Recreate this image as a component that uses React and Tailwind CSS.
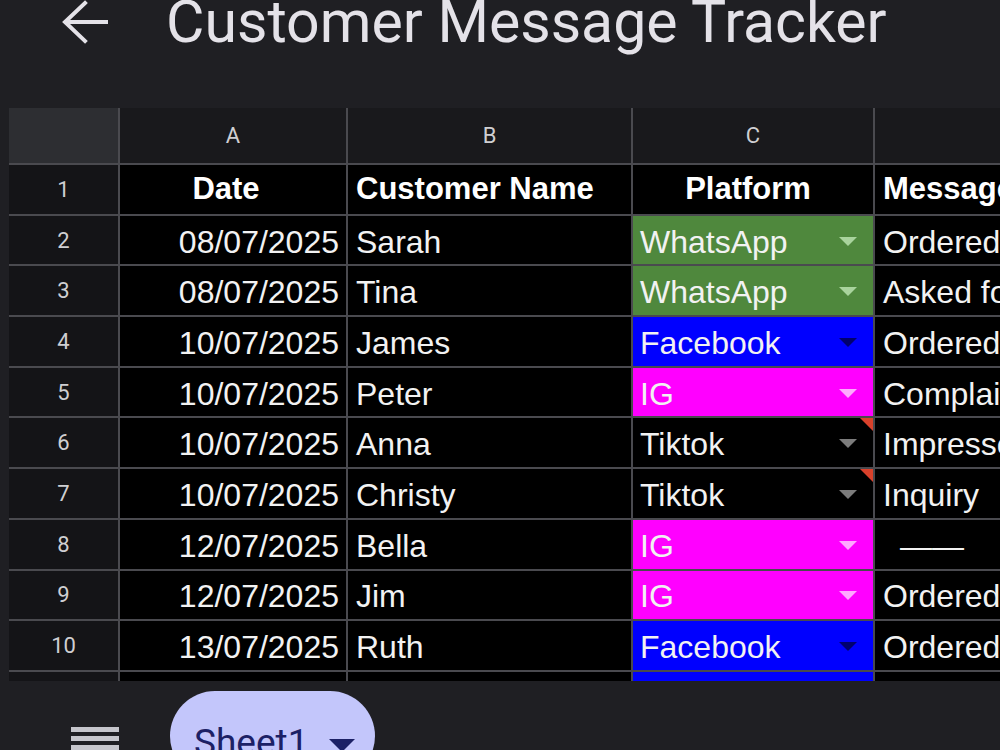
import React from "react";

const rows = [
  { date: "08/07/2025", name: "Sarah", platform: "WhatsApp", msg: "Ordered online" },
  { date: "08/07/2025", name: "Tina", platform: "WhatsApp", msg: "Asked for price" },
  { date: "10/07/2025", name: "James", platform: "Facebook", msg: "Ordered online" },
  { date: "10/07/2025", name: "Peter", platform: "IG", msg: "Complained" },
  { date: "10/07/2025", name: "Anna", platform: "Tiktok", msg: "Impressed", note: true },
  { date: "10/07/2025", name: "Christy", platform: "Tiktok", msg: "Inquiry", note: true },
  { date: "12/07/2025", name: "Bella", platform: "IG", msg: "——", dash: true },
  { date: "12/07/2025", name: "Jim", platform: "IG", msg: "Ordered online" },
  { date: "13/07/2025", name: "Ruth", platform: "Facebook", msg: "Ordered online" },
];

// chip colours per platform: cell background + dropdown caret
const chip = {
  WhatsApp: { bg: "bg-[#4f883d]", caret: "#a9d49d" },
  Facebook: { bg: "bg-[#0000ff]", caret: "#00006e" },
  IG: { bg: "bg-[#ff00ff]", caret: "#ffa9ff" },
  Tiktok: { bg: "bg-black", caret: "#7c7c7c" },
};

const cellFont = { fontFamily: "'Liberation Sans', Arial, sans-serif" };

function Caret({ color }) {
  return (
    <svg width="18" height="10" viewBox="0 0 18 10" className="shrink-0">
      <path d="M0 0 H18 L9 9 Z" fill={color} />
    </svg>
  );
}

function RowHead({ children }) {
  return (
    <div
      className="bg-[#141417] flex items-center justify-center text-[22px] text-[#cfcfd2]"
      style={{ fontFamily: "Roboto, sans-serif" }}
    >
      {children}
    </div>
  );
}

export default function App() {
  return (
    <div
      className="w-[1000px] h-[750px] overflow-hidden bg-[#1f1f23] text-white"
      style={{ fontFamily: "Roboto, 'Noto Sans', sans-serif" }}
    >
      {/* top app bar */}
      <div className="h-[108px] flex items-start">
        <svg width="48" height="46" viewBox="0 0 48 46" className="ml-[60px]">
          <path
            d="M46 22 H6 M25 3 L5 22 L25 41"
            stroke="#e4e2e8"
            strokeWidth="4"
            fill="none"
            strokeLinecap="square"
          />
        </svg>
        <h1 className="ml-[58px] -mt-[8px] text-[59px] leading-none text-[#e4e2e8] whitespace-nowrap">
          Customer Message Tracker
        </h1>
      </div>

      {/* sheet grid */}
      <div className="ml-[9px] w-[991px] overflow-hidden">
        <div
          className="grid grid-cols-[109px_226px_283px_240px_220px] grid-rows-[55px_repeat(10,48.7px)_9px] gap-[2px] bg-[#4a4a4f] w-max"
          style={cellFont}
        >
          {/* column letters */}
          <div className="bg-[#2d2e32]" />
          {["A", "B", "C", ""].map((c, i) => (
            <div
              key={i}
              className="bg-[#19191c] flex items-center justify-center text-[22px] text-[#cfcfd2]"
              style={{ fontFamily: "Roboto, sans-serif" }}
            >
              {c}
            </div>
          ))}

          {/* header row */}
          <RowHead>1</RowHead>
          <div className="bg-black flex items-center justify-center pr-[14px] text-[31px] font-bold">Date</div>
          <div className="bg-black flex items-center pl-[8px] text-[31px] font-bold whitespace-nowrap">
            Customer Name
          </div>
          <div className="bg-black flex items-center justify-center pr-[10px] text-[31px] font-bold">Platform</div>
          <div className="bg-black flex items-center pl-[8px] text-[31px] font-bold whitespace-nowrap">
            Message
          </div>

          {rows.map((r, i) => (
            <React.Fragment key={i}>
              <RowHead>{i + 2}</RowHead>
              <div className="bg-black flex items-center justify-end pr-[7px] pt-[3px] text-[32px] text-[#f2f2f2]">
                {r.date}
              </div>
              <div className="bg-black flex items-center pl-[8px] pt-[3px] text-[32px] text-[#f2f2f2]">{r.name}</div>
              <div
                className={`${chip[r.platform].bg} relative flex items-center justify-between pl-[7px] pr-[16px] pt-[3px] text-[32px] text-[#f2f2f2]`}
              >
                <span>{r.platform}</span>
                <Caret color={chip[r.platform].caret} />
                {r.note && (
                  <svg width="13" height="13" viewBox="0 0 13 13" className="absolute top-0 right-0">
                    <path d="M0 0 H13 V13 Z" fill="#d9412b" />
                  </svg>
                )}
              </div>
              <div
                className={`bg-black flex items-center pt-[3px] text-[32px] text-[#f2f2f2] whitespace-nowrap overflow-hidden ${
                  r.dash ? "pl-[25px]" : "pl-[8px]"
                }`}
              >
                {r.msg}
              </div>
            </React.Fragment>
          ))}

          {/* next row, cut off by the tab bar */}
          <div className="bg-[#141417]" />
          <div className="bg-black" />
          <div className="bg-black" />
          <div className="bg-[#0000ff]" />
          <div className="bg-black" />
        </div>
      </div>

      {/* sheet tabs */}
      <div className="flex items-start mt-[10px]">
        <div className="ml-[71px] mt-[36px] w-[48px] flex flex-col gap-[4px]">
          <div className="h-[5px] bg-[#c6c6cc]" />
          <div className="h-[5px] bg-[#c6c6cc]" />
          <div className="h-[5px] bg-[#c6c6cc]" />
        </div>
        <div className="ml-[51px] w-[205px] h-[90px] rounded-[45px] bg-[#c3c6fb] flex items-start pl-[24px] pt-[33px] gap-[20px]">
          <span className="text-[37px] leading-none text-[#1c2166]">Sheet1</span>
          <svg width="26" height="14" viewBox="0 0 26 14" className="mt-[15px]">
            <path d="M0 0 H26 L13 13 Z" fill="#1c2166" />
          </svg>
        </div>
      </div>
    </div>
  );
}
